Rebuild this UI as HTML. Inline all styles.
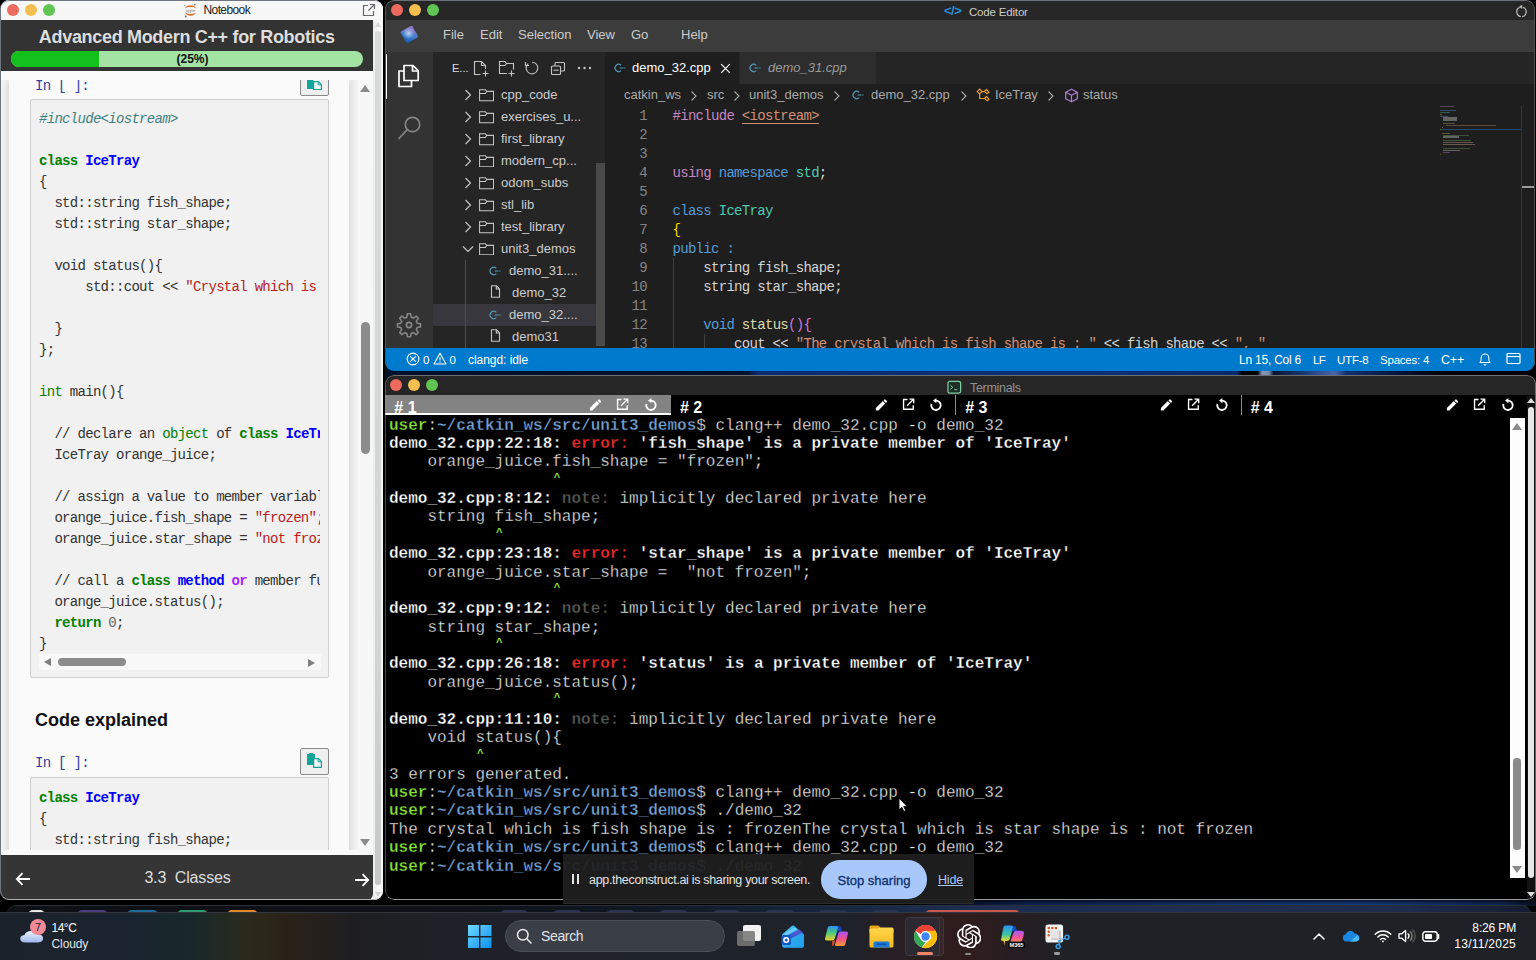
<!DOCTYPE html>
<html lang="en">
<head>
<meta charset="utf-8">
<title>Workspace</title>
<style>
*{box-sizing:border-box;margin:0;padding:0}
html,body{width:1536px;height:960px;overflow:hidden;background:#000}
body{position:relative;font-family:"Liberation Sans",sans-serif;color:#000}
.abs{position:absolute}
.sans{font-family:"Liberation Sans",sans-serif}
.mono{font-family:"Liberation Mono",monospace}
.dot{position:absolute;width:12px;height:12px;border-radius:50%}
/* ---------- desktop ---------- */
#desk{position:absolute;left:0;top:0;width:1536px;height:960px;background:#000;overflow:hidden}
#wall1{position:absolute;left:385px;top:362px;width:1151px;height:22px;background:linear-gradient(90deg,#03102c 0%,#04122f 31.500%,#0b2c72 32.500%,#0c3078 60%,#0a2a6c 74%,#000 74.500%,#000 75.800%,#8796b8 76.200%,#7a8cb0 76.800%,#0a1630 77.200%,#1c3a78 80%,#4a68a8 82.500%,#12306e 83.500%,#06143a 88%,#000 92.500%)}
#wall2{position:absolute;left:385px;top:896px;width:1151px;height:10px;background:linear-gradient(90deg,#000 0%,#000 44%,#06122c 50%,#0c2250 56%,#142f66 70%,#18387a 85%,#102450 97%,#081020 100%)}
#wall2b{position:absolute;left:385px;top:896px;width:1151px;height:10px;background:linear-gradient(180deg,rgba(0,0,0,.55) 0%,rgba(0,0,0,.55) 45%,rgba(0,0,0,0) 85%)}
#dock{position:absolute;left:7px;top:905px;width:1524px;height:12px;border-radius:9px 9px 0 0;border-top:1px solid #2b3038;background:linear-gradient(90deg,#0d1116 0%,#0e1218 30%,#101824 42%,#15243a 52%,#1b2d50 62%,#1e2d52 75%,#1d2b4e 92%,#141c30 100%)}
.pk{position:absolute;top:909.500px;height:6px;border-radius:5px 5px 0 0}
/* ---------- notebook window ---------- */
#nb{position:absolute;left:0;top:0;width:383px;height:899.500px;background:#fafafa;border-radius:9px 9px 9px 9px;overflow:hidden;border-left:1px solid #70747c}
#nb .title{position:absolute;left:0;top:0;width:383px;height:20px;background:#f7f7f7}
#nb .hdr{position:absolute;left:0;top:20px;width:372px;height:51px;background:#333}
#nb .ftr{position:absolute;left:0;top:855px;width:372px;height:44.500px;background:#353535;border-radius:0 0 6px 0}

.nbm{font-family:"Liberation Mono",monospace;font-size:14px;line-height:21px;letter-spacing:-0.7px;white-space:pre}
.nbc{overflow:hidden}
.nbc pre{font-family:"Liberation Mono",monospace;font-size:14px;line-height:21px;letter-spacing:-0.7px;color:#333;white-space:pre}
.nbc .cm{color:#408080;font-style:italic}
.nbc .kw{color:#008000}
.nbc .nc{color:#0000ff}
.nbc .kt{color:#008000}
.nbc .st{color:#ba2121}
.nbc .ow{color:#aa22ff}
.nbc .nu{color:#666}
/* ---------- code editor window ---------- */
#ce{position:absolute;left:385px;top:0;width:1150px;height:371px;background:#1e1e1e;border-radius:9px 9px 9px 9px;overflow:hidden}

.ui{font-family:"Liberation Sans",sans-serif;font-size:13px;line-height:18px;white-space:pre}

.ln{font-family:"Liberation Mono",monospace;font-size:14px;line-height:19px;letter-spacing:-0.7px;color:#858585;text-align:right;white-space:pre}
.cd{font-family:"Liberation Mono",monospace;font-size:14px;line-height:19px;letter-spacing:-0.7px;color:#d4d4d4;white-space:pre}
.cd .c1{color:#c586c0}.cd .k{color:#569cd6}.cd .t{color:#4ec9b0}.cd .s{color:#ce9178}.cd .f{color:#dcdcaa}.cd .b1{color:#ffd700}.cd .b2{color:#da70d6}
.cd .u{text-decoration:underline;text-underline-offset:3px}
.sb{font-family:"Liberation Sans",sans-serif;font-size:11.500px;line-height:18px;color:#fff;white-space:pre;letter-spacing:-0.22px}
/* ---------- terminals window ---------- */
#tm{position:absolute;left:385px;top:375px;width:1150.500px;height:524.500px;background:#000;border-radius:9px;overflow:hidden}

.tt{font-family:"Liberation Mono",monospace;font-size:16px;line-height:18px;color:#ececec;white-space:pre;-webkit-text-stroke:.3px #000}
.tt b{-webkit-text-stroke:.28px #000}
.tt .ca{-webkit-text-stroke:0;display:inline-block;width:9.600px;text-align:center;font-size:11px;line-height:10px;vertical-align:3.800px}
.tt b{font-weight:bold;color:#fff}
.tt .g{color:#8ae234}.tt .bl{color:#729fcf}.tt .r{color:#ef2929}.tt .n{color:#555753}
/* ---------- taskbar ---------- */
#tb{position:absolute;left:0;top:912px;width:1536px;height:48px;background:#1e2227}
</style>
</head>
<body>
<div id="desk">
<div id="wall1"></div>
<div id="wall2"></div><div id="wall2b"></div>
<div id="dock"></div>
<div class="pk" style="left:28px;width:17px;background:#e8e8e8"></div><div class="pk" style="left:77px;width:31px;background:#4a3c80"></div><div class="pk" style="left:127px;width:31px;background:#1c6c9c"></div><div class="pk" style="left:177px;width:31px;background:#2c9c6c"></div><div class="pk" style="left:227px;width:31px;background:#e08a2c"></div><div class="pk" style="left:500px;width:28px;background:#2a3450"></div><div class="pk" style="left:553px;width:29px;background:#2a3450"></div><div class="pk" style="left:606px;width:29px;background:#2a3450"></div><div class="pk" style="left:659px;width:29px;background:#2a3450"></div><div class="pk" style="left:713px;width:28px;background:#2a3450"></div><div class="pk" style="left:765px;width:30px;background:#2a3450"></div><div class="pk" style="left:818px;width:30px;background:#2a3450"></div><div class="pk" style="left:872px;width:28px;background:#2a3450"></div><div class="pk" style="left:925px;width:95px;background:#c8584a"></div>

<!-- NOTEBOOK -->
<div id="nb">
<div class="title"></div>
<div class="hdr"></div>
<div class="dot" style="left:6px;top:4px;background:#ec6a5e"></div>
<div class="dot" style="left:24px;top:4px;background:#f4bf4f"></div>
<div class="dot" style="left:42px;top:4px;background:#61c554"></div>
<svg class="abs" style="left:182px;top:3px" width="15" height="15" viewBox="0 0 15 15"><path d="M2 9.600A5.800 4.600 0 0 0 13 9.600A6 2.400 0 0 1 2 9.600Z" fill="#e46e2e"/><path d="M2 5.400A5.800 4.600 0 0 1 13 5.400A6 2.400 0 0 0 2 5.400Z" fill="#e46e2e"/><circle cx="11.800" cy="1.600" r=".9" fill="#767677"/><circle cx="2.800" cy="13.400" r="1" fill="#767677"/><circle cx="2" cy="2.600" r=".6" fill="#767677"/><text x="7.500" y="8.500" font-size="3.200" text-anchor="middle" fill="#6a6a6a" font-family="Liberation Sans, sans-serif" font-style="italic">jupyter</text></svg>
<div class="abs sans" style="left:202.500px;top:2.300px;font-size:12px;line-height:16px;letter-spacing:-0.6px;color:#222">Notebook</div>
<svg class="abs" style="left:361px;top:3px" width="14" height="14" viewBox="0 0 14 14" fill="none" stroke="#666" stroke-width="1.2"><path d="M6 2.5H1.5V12.5H11.5V8"/><path d="M8 1.5H12.5V6M12.5 1.5L6.5 7.5"/></svg>
<div class="abs sans" style="left:0;top:24px;width:371.500px;text-align:center;font-size:18px;line-height:26px;font-weight:bold;color:#ddd;letter-spacing:-0.32px">Advanced Modern C++ for Robotics</div>
<div class="abs" style="left:10px;top:51px;width:352px;height:16px;border-radius:8px;background:#a3e3a3;overflow:hidden"><div style="width:88px;height:16px;background:#14c11c"></div></div>
<div class="abs sans" style="left:15px;top:51px;width:353px;height:16px;text-align:center;font-size:12px;line-height:17px;font-weight:bold;color:#111">(25%)</div>
<!-- notebook body -->
<div class="abs" style="left:0;top:71px;width:373px;height:784px;background:#f9f9f9;overflow:hidden">
 <div class="abs" style="left:8px;top:9px;width:340px;height:800px;background:#fafafa;box-shadow:0 0 10px 1px rgba(87,87,87,.28)"></div>
 <!-- cell 1 -->
 <div class="abs nbm" style="left:34px;top:4.5px;color:#303f9f">In [ ]:</div>
 <div class="abs" style="left:299px;top:-4px;width:29px;height:29px;background:#efefef;border:1px solid #8a8a8a;border-radius:2px"></div>
 <svg class="abs" style="left:306px;top:7px" width="17" height="12" viewBox="0 0 17 12"><rect x="0" y="0" width="6.500" height="11" fill="#12a59a"/><path d="M6.600 3.600H11.400L14.400 6.600V11.600H6.600Z" fill="#f4f4f4" stroke="#12a59a" stroke-width="1.2"/><path d="M11.200 3.600V6.800H14.400" fill="none" stroke="#12a59a" stroke-width="1"/></svg>
 <div class="abs" style="left:29px;top:28px;width:299px;height:579px;background:#f1f1f1;border:1px solid #cfcfcf;border-radius:2px"></div>
 <div class="abs nbc" style="left:38px;top:38.400px;width:281px;height:544.600px">
<pre><i class="cm">#include&lt;iostream&gt;</i>

<b class="kw">class</b> <b class="nc">IceTray</b>
{
  std::string fish_shape;
  std::string star_shape;

  void status(){
      std::cout &lt;&lt; <span class="st">"Crystal which is fish shape is : "</span>

  }
};

<span class="kt">int</span> main(){

  // declare an <span class="kt">object</span> of <b class="kw">class</b> <b class="nc">IceTray</b>
  IceTray orange_juice;

  // assign a value to member variables
  orange_juice.fish_shape = <span class="st">"frozen"</span>;
  orange_juice.star_shape = <span class="st">"not frozen"</span>;

  // call a <b class="kw">class</b> <b class="nc">method</b> <b class="ow">or</b> member function
  orange_juice.status();
  <b class="kw">return</b> <span class="nu">0</span>;
}</pre>
 </div>
 <!-- h-scrollbar -->
 <div class="abs" style="left:38px;top:583px;width:282px;height:16px;background:#f8f8f8"></div>
 <div class="abs" style="left:42.500px;top:587px;border-style:solid;border-width:4.500px 7.500px 4.500px 0;border-color:transparent #7f7f7f transparent transparent;width:0;height:0"></div>
 <div class="abs" style="left:307px;top:587.500px;border-style:solid;border-width:4.500px 0 4.500px 7.500px;border-color:transparent transparent transparent #7f7f7f;width:0;height:0"></div>
 <div class="abs" style="left:57px;top:587px;width:68px;height:8px;border-radius:4px;background:#8b8b8b"></div>
 <!-- heading -->
 <div class="abs sans" style="left:34px;top:637.700px;font-size:18px;line-height:22px;font-weight:bold;color:#111">Code explained</div>
 <!-- cell 2 -->
 <div class="abs nbm" style="left:34px;top:682.200px;color:#303f9f">In [ ]:</div>
 <div class="abs" style="left:299px;top:677px;width:29px;height:27px;background:#efefef;border:1px solid #8a8a8a;border-radius:2px"></div>
 <svg class="abs" style="left:306px;top:682px" width="17" height="16" viewBox="0 0 17 16"><rect x="0" y="1" width="8" height="11" fill="#12a59a"/><rect x="2" y="0" width="4" height="2" fill="#12a59a"/><path d="M6.6 5.6H11.4L14.4 8.6V14.4H6.6Z" fill="#f4f4f4" stroke="#12a59a" stroke-width="1.2"/><path d="M11.2 5.6V8.8H14.4" fill="none" stroke="#12a59a" stroke-width="1"/></svg>
 <div class="abs" style="left:29px;top:706px;width:299px;height:100px;background:#f1f1f1;border:1px solid #cfcfcf;border-radius:2px"></div>
 <div class="abs nbc" style="left:38px;top:717.400px;width:281px;height:68px">
<pre><b class="kw">class</b> <b class="nc">IceTray</b>
{
  std::string fish_shape;
  std::string star_shape;</pre>
 </div>
 <div class="abs" style="left:0;top:778.600px;width:373px;height:6px;background:#f9f9f9"></div>
 <!-- inner v-scrollbar -->
 <div class="abs" style="left:349px;top:9px;width:8px;height:769px;background:linear-gradient(90deg,#e4e4e4,#f4f4f4)"></div>
 <div class="abs" style="left:357px;top:0;width:16px;height:784px;background:#f7f7f7"></div>
 <div class="abs" style="left:358.500px;top:14px;border-style:solid;border-width:0 5px 7px 5px;border-color:transparent transparent #8b8b8b transparent;width:0;height:0"></div>
 <div class="abs" style="left:358.500px;top:768px;border-style:solid;border-width:7px 5px 0 5px;border-color:#8b8b8b transparent transparent transparent;width:0;height:0"></div>
 <div class="abs" style="left:360px;top:251px;width:9px;height:132px;border-radius:4.5px;background:#8b8b8b"></div>
 <div class="abs" style="left:0;top:0;width:373px;height:9px;background:#fafafa"></div>
</div>
<!-- outer scrollbar -->
<div class="abs" style="left:372px;top:20px;width:11px;height:880px;background:linear-gradient(90deg,#ececec,#f8f8f8 60%,#f2f2f2)"></div>
<div class="abs" style="left:374.200px;top:31px;width:5.600px;height:853.700px;border-radius:2.800px;background:linear-gradient(180deg,#d8dada,#d4d6d6 70%,#c6c8c8)"></div>
<div class="abs" style="left:373.500px;top:22px;border-style:solid;border-width:0 3.500px 5px 3.500px;border-color:transparent transparent #d8d8d8 transparent;width:0;height:0"></div>
<div class="abs" style="left:373.500px;top:892px;border-style:solid;border-width:5px 3.500px 0 3.500px;border-color:#d0d0d0 transparent transparent transparent;width:0;height:0"></div>

<div class="ftr"></div>
<div class="abs sans" style="left:0;top:867px;width:373px;text-align:center;font-size:16px;line-height:22px;color:#ddd;white-space:pre;letter-spacing:-0.15px">3.3  Classes</div>
<svg class="abs" style="left:14px;top:871.500px" width="16" height="14" viewBox="0 0 16 14" fill="none" stroke="#fff" stroke-width="1.8"><path d="M15 7H2M7.5 1.2L1.8 7L7.5 12.8"/></svg>
<svg class="abs" style="left:353px;top:872.700px" width="16" height="14" viewBox="0 0 16 14" fill="none" stroke="#fff" stroke-width="1.8"><path d="M1 7H14M8.500 1.200L14.200 7L8.500 12.800"/></svg>
<div class="abs" style="left:-1px;top:0;width:384px;height:899.500px;border-radius:9px;border:1px solid transparent;border-top:1.500px solid #72767e;border-bottom-color:#b0b0b0"></div>

</div>

<!-- CODE EDITOR -->
<div id="ce">
<div class="abs" style="left:0;top:0;width:1151px;height:20px;background:#262626"></div>
<div class="dot" style="left:6px;top:4px;background:#ec6a5e"></div>
<div class="dot" style="left:24px;top:4px;background:#f4bf4f"></div>
<div class="dot" style="left:42px;top:4px;background:#61c554"></div>
<div class="abs sans" style="left:559px;top:3px;font-size:13px;line-height:16px;font-weight:bold;color:#2a8fd0;letter-spacing:-0.5px">&lt;/&gt;</div>
<div class="abs sans" style="left:584px;top:4px;font-size:11.5px;line-height:16px;color:#ccc;letter-spacing:-0.18px">Code Editor</div>
<svg class="abs" style="left:1129.500px;top:4.500px" width="13" height="13" viewBox="0 0 13 13" fill="none" stroke="#bdbdbd" stroke-width="1.200"><path d="M5.800 11.700A5 5 0 0 1 4.600 2.300M8.200 2.200A5 5 0 0 1 7.200 11.700"/><path d="M7.200 -.3L4.200 1.700L7.200 3.900Z" fill="#bdbdbd" stroke="none"/></svg>
<div class="abs" style="left:0;top:20px;width:1151px;height:32px;background:#3c3c3c"></div>
<svg class="abs" style="left:13px;top:23px" width="24" height="22" viewBox="0 0 24 22"><defs><linearGradient id="lg1" x1="0" y1="1" x2="1" y2="0"><stop offset="0" stop-color="#1553ac"/><stop offset=".45" stop-color="#3f7fd0"/><stop offset=".8" stop-color="#8f74c6"/><stop offset="1" stop-color="#9a78c8"/></linearGradient><radialGradient id="lg2" cx=".5" cy=".4" r=".45"><stop offset="0" stop-color="#c4d8f4" stop-opacity=".95"/><stop offset="1" stop-color="#9dc0ea" stop-opacity="0"/></radialGradient></defs><g transform="translate(11.300 11.400) rotate(-29)"><rect x="-6.700" y="-6.700" width="13.400" height="13.400" rx="1.300" fill="url(#lg1)"/><rect x="-6.700" y="-6.700" width="13.400" height="13.400" rx="1.300" fill="url(#lg2)"/></g></svg>
<div class="abs ui" style="left:58px;top:26.300px;color:#ccc">File</div>
<div class="abs ui" style="left:95px;top:26.300px;color:#ccc">Edit</div>
<div class="abs ui" style="left:133px;top:26.300px;color:#ccc">Selection</div>
<div class="abs ui" style="left:202px;top:26.300px;color:#ccc">View</div>
<div class="abs ui" style="left:246px;top:26.300px;color:#ccc">Go</div>
<div class="abs ui" style="left:296px;top:26.300px;color:#ccc">Help</div>
<div class="abs" style="left:0;top:52px;width:48px;height:296px;background:#333"></div>
<div class="abs" style="left:0;top:54px;width:2px;height:45px;background:#fff"></div>
<svg class="abs" style="left:12px;top:63px" width="24" height="26" viewBox="0 0 24 26" fill="none" stroke="#fff" stroke-width="1.7" stroke-linejoin="round"><path d="M7 17.500V2.500H16L21.200 7.700V17.500Z"/><path d="M15.500 2.500V8H21"/><path d="M7 8H2V23.500H14.500V17.500"/></svg>
<svg class="abs" style="left:12px;top:115px" width="26" height="26" viewBox="0 0 26 26" fill="none" stroke="#858585" stroke-width="1.7"><circle cx="15.500" cy="9.500" r="7.200"/><path d="M10.300 14.700L1.500 24"/></svg>
<svg class="abs" style="left:11px;top:312px" width="26" height="26" viewBox="0 0 26 26" fill="none" stroke="#858585" stroke-width="1.6" stroke-linejoin="round"><circle cx="13" cy="13" r="2.600"/><path d="M11.400 1.800H14.600L15.200 5.200L17.300 6.100L20.100 4.100L22.300 6.300L20.300 9.100L21.200 11.200L24.500 11.800V14.900L21.200 15.500L20.300 17.600L22.300 20.400L20.100 22.600L17.300 20.600L15.200 21.500L14.600 24.800H11.400L10.800 21.500L8.700 20.600L5.900 22.600L3.700 20.400L5.700 17.600L4.800 15.500L1.500 14.900V11.800L4.800 11.200L5.700 9.100L3.700 6.300L5.900 4.100L8.700 6.100L10.800 5.200Z"/></svg>
<div class="abs" style="left:48px;top:52px;width:172px;height:296px;background:#252526"></div>
<div class="abs sans" style="left:67px;top:60px;font-size:11px;line-height:16px;color:#ddd">E...</div>
<svg class="abs" style="left:88px;top:60px" width="18" height="17" viewBox="0 0 18 17" fill="none" stroke="#c5c5c5" stroke-width="1.1"><path d="M7.500 14.500H1.500V1.500H8.500L12.500 5.500V9"/><path d="M8.500 1.500V5.500H12.500"/><path d="M12.500 10.500V16.500M9.500 13.500H15.500"/></svg>
<svg class="abs" style="left:113px;top:60px" width="19" height="17" viewBox="0 0 19 17" fill="none" stroke="#c5c5c5" stroke-width="1.1"><path d="M9 13.500H1.500V1.500H7L8.500 3.500H15.500V9.500"/><path d="M1.500 5.500H7L8.500 3.500"/><path d="M13.500 10.500V16.500M10.500 13.500H16.500"/></svg>
<svg class="abs" style="left:139px;top:60px" width="16" height="16" viewBox="0 0 16 16" fill="none" stroke="#c5c5c5" stroke-width="1.1"><path d="M4.200 3.600A5.800 5.800 0 1 0 8 2.200"/><path d="M1.500 2V5.500H5"/></svg>
<svg class="abs" style="left:165px;top:60px" width="16" height="16" viewBox="0 0 16 16" fill="none" stroke="#c5c5c5" stroke-width="1.1"><rect x="1.500" y="6" width="9" height="8.500" rx="1"/><path d="M5 6V3.500Q5 2.500 6 2.500H13.500Q14.500 2.500 14.500 3.500V10Q14.500 11 13.500 11H10.500"/><path d="M3.500 10.200H8.500"/></svg>
<svg class="abs" style="left:192px;top:66px" width="15" height="4" viewBox="0 0 15 4" fill="#c5c5c5"><circle cx="2" cy="2" r="1.200"/><circle cx="7.500" cy="2" r="1.200"/><circle cx="13" cy="2" r="1.200"/></svg>
<div class="abs" style="left:48px;top:304px;width:163px;height:22px;background:#37373d"></div>
<svg class="abs" style="left:79px;top:89px" width="8" height="12" viewBox="0 0 8 12" fill="none" stroke="#c5c5c5" stroke-width="1.2"><path d="M1.500 1L6.500 6L1.500 11"/></svg>
<svg class="abs" style="left:93.5px;top:89px" width="16" height="12.500" viewBox="0 0 17 13" fill="none" stroke="#c5c5c5" stroke-width="1.1"><path d="M.6 12.400V.6H6.800L8.200 2.400H15.400V12.400Z"/><path d="M.6 4.600H6.800L8.200 2.400"/></svg>
<div class="abs ui" style="left:116px;top:86px;color:#ccc">cpp_code</div>
<svg class="abs" style="left:79px;top:111px" width="8" height="12" viewBox="0 0 8 12" fill="none" stroke="#c5c5c5" stroke-width="1.2"><path d="M1.500 1L6.500 6L1.500 11"/></svg>
<svg class="abs" style="left:93.5px;top:111px" width="16" height="12.500" viewBox="0 0 17 13" fill="none" stroke="#c5c5c5" stroke-width="1.1"><path d="M.6 12.400V.6H6.800L8.200 2.400H15.400V12.400Z"/><path d="M.6 4.600H6.800L8.200 2.400"/></svg>
<div class="abs ui" style="left:116px;top:108px;color:#ccc">exercises_u...</div>
<svg class="abs" style="left:79px;top:133px" width="8" height="12" viewBox="0 0 8 12" fill="none" stroke="#c5c5c5" stroke-width="1.2"><path d="M1.500 1L6.500 6L1.500 11"/></svg>
<svg class="abs" style="left:93.5px;top:133px" width="16" height="12.500" viewBox="0 0 17 13" fill="none" stroke="#c5c5c5" stroke-width="1.1"><path d="M.6 12.400V.6H6.800L8.200 2.400H15.400V12.400Z"/><path d="M.6 4.600H6.800L8.200 2.400"/></svg>
<div class="abs ui" style="left:116px;top:130px;color:#ccc">first_library</div>
<svg class="abs" style="left:79px;top:154.5px" width="8" height="12" viewBox="0 0 8 12" fill="none" stroke="#c5c5c5" stroke-width="1.2"><path d="M1.500 1L6.500 6L1.500 11"/></svg>
<svg class="abs" style="left:93.5px;top:154.5px" width="16" height="12.500" viewBox="0 0 17 13" fill="none" stroke="#c5c5c5" stroke-width="1.1"><path d="M.6 12.400V.6H6.800L8.200 2.400H15.400V12.400Z"/><path d="M.6 4.600H6.800L8.200 2.400"/></svg>
<div class="abs ui" style="left:116px;top:151.5px;color:#ccc">modern_cp...</div>
<svg class="abs" style="left:79px;top:177px" width="8" height="12" viewBox="0 0 8 12" fill="none" stroke="#c5c5c5" stroke-width="1.2"><path d="M1.500 1L6.500 6L1.500 11"/></svg>
<svg class="abs" style="left:93.5px;top:177px" width="16" height="12.500" viewBox="0 0 17 13" fill="none" stroke="#c5c5c5" stroke-width="1.1"><path d="M.6 12.400V.6H6.800L8.200 2.400H15.400V12.400Z"/><path d="M.6 4.600H6.800L8.200 2.400"/></svg>
<div class="abs ui" style="left:116px;top:174px;color:#ccc">odom_subs</div>
<svg class="abs" style="left:79px;top:199px" width="8" height="12" viewBox="0 0 8 12" fill="none" stroke="#c5c5c5" stroke-width="1.2"><path d="M1.500 1L6.500 6L1.500 11"/></svg>
<svg class="abs" style="left:93.5px;top:199px" width="16" height="12.500" viewBox="0 0 17 13" fill="none" stroke="#c5c5c5" stroke-width="1.1"><path d="M.6 12.400V.6H6.800L8.200 2.400H15.400V12.400Z"/><path d="M.6 4.600H6.800L8.200 2.400"/></svg>
<div class="abs ui" style="left:116px;top:196px;color:#ccc">stl_lib</div>
<svg class="abs" style="left:79px;top:221px" width="8" height="12" viewBox="0 0 8 12" fill="none" stroke="#c5c5c5" stroke-width="1.2"><path d="M1.500 1L6.500 6L1.500 11"/></svg>
<svg class="abs" style="left:93.5px;top:221px" width="16" height="12.500" viewBox="0 0 17 13" fill="none" stroke="#c5c5c5" stroke-width="1.1"><path d="M.6 12.400V.6H6.800L8.200 2.400H15.400V12.400Z"/><path d="M.6 4.600H6.800L8.200 2.400"/></svg>
<div class="abs ui" style="left:116px;top:218px;color:#ccc">test_library</div>
<svg class="abs" style="left:77px;top:244.5px" width="12" height="8" viewBox="0 0 12 8" fill="none" stroke="#c5c5c5" stroke-width="1.2"><path d="M1 1.500L6 6.500L11 1.500"/></svg>
<svg class="abs" style="left:93.5px;top:242.5px" width="16" height="12.500" viewBox="0 0 17 13" fill="none" stroke="#c5c5c5" stroke-width="1.1"><path d="M.6 12.400V.6H6.800L8.200 2.400H15.400V12.400Z"/><path d="M.6 4.600H6.800L8.200 2.400"/></svg>
<div class="abs ui" style="left:116px;top:239.5px;color:#ccc">unit3_demos</div>
<div class="abs" style="left:80.300px;top:260px;width:1px;height:88px;background:#4c4c4c"></div>
<svg class="abs" style="left:104px;top:266px" width="12" height="10" viewBox="0 0 12 10" fill="none" stroke="#519aba" stroke-width="1.2"><path d="M7.200 2.400A3.600 3.600 0 1 0 7.200 7.600"/><path d="M5.500 5H9.500M10.200 5H11.500" stroke-width="1"/></svg>
<div class="abs ui" style="left:124px;top:262px;color:#ccc">demo_31....</div>
<svg class="abs" style="left:105px;top:284.500px" width="11" height="13" viewBox="0 0 11 13" fill="none" stroke="#c5c5c5" stroke-width="1.1"><path d="M1.500 .8H6.500L9.500 3.800V12.200H1.500Z"/><path d="M6.300 .8V4H9.500"/></svg>
<div class="abs ui" style="left:127px;top:283.5px;color:#ccc">demo_32</div>
<svg class="abs" style="left:104px;top:310px" width="12" height="10" viewBox="0 0 12 10" fill="none" stroke="#519aba" stroke-width="1.2"><path d="M7.200 2.400A3.600 3.600 0 1 0 7.200 7.600"/><path d="M5.500 5H9.500M10.200 5H11.500" stroke-width="1"/></svg>
<div class="abs ui" style="left:124px;top:306px;color:#ccc">demo_32....</div>
<svg class="abs" style="left:105px;top:328.500px" width="11" height="13" viewBox="0 0 11 13" fill="none" stroke="#c5c5c5" stroke-width="1.1"><path d="M1.500 .8H6.500L9.500 3.800V12.200H1.500Z"/><path d="M6.300 .8V4H9.500"/></svg>
<div class="abs ui" style="left:127px;top:327.5px;color:#ccc">demo31</div>
<div class="abs" style="left:211px;top:163px;width:9px;height:183px;background:#4a4a4a"></div>
<div class="abs" style="left:220px;top:52px;width:931px;height:32px;background:#252526"></div>
<div class="abs" style="left:220px;top:52px;width:134px;height:32px;background:#1e1e1e"></div>
<div class="abs" style="left:354.5px;top:52px;width:136px;height:32px;background:#2d2d2d"></div>
<svg class="abs" style="left:229px;top:62.5px" width="12" height="10" viewBox="0 0 12 10" fill="none" stroke="#519aba" stroke-width="1.2"><path d="M7.200 2.400A3.600 3.600 0 1 0 7.200 7.600"/><path d="M5.500 5H9.500M10.200 5H11.500" stroke-width="1"/></svg>
<div class="abs ui" style="left:247px;top:58.5px;color:#fff">demo_32.cpp</div>
<svg class="abs" style="left:335px;top:63px" width="11" height="11" viewBox="0 0 11 11" fill="none" stroke="#fff" stroke-width="1.2"><path d="M1.200 1.200L9.800 9.800M9.800 1.200L1.200 9.800"/></svg>
<svg class="abs" style="left:364px;top:62.5px" width="12" height="10" viewBox="0 0 12 10" fill="none" stroke="#519aba" stroke-width="1.2"><path d="M7.200 2.400A3.600 3.600 0 1 0 7.200 7.600"/><path d="M5.500 5H9.500M10.200 5H11.500" stroke-width="1"/></svg>
<div class="abs ui" style="left:383px;top:58.5px;color:#9a9a9a;font-style:italic">demo_31.cpp</div>
<div class="abs" style="left:220px;top:84px;width:931px;height:22px;background:#1e1e1e"></div>
<div class="abs ui" style="left:239px;top:85.500px;color:#a9a9a9">catkin_ws</div>
<div class="abs ui" style="left:322px;top:85.500px;color:#a9a9a9">src</div>
<div class="abs ui" style="left:364px;top:85.500px;color:#a9a9a9">unit3_demos</div>
<div class="abs ui" style="left:486px;top:85.500px;color:#a9a9a9">demo_32.cpp</div>
<div class="abs ui" style="left:610px;top:85.500px;color:#a9a9a9">IceTray</div>
<div class="abs ui" style="left:698px;top:85.500px;color:#a9a9a9">status</div>
<svg class="abs" style="left:304.5px;top:89.500px" width="8" height="12" viewBox="0 0 8 12" fill="none" stroke="#a9a9a9" stroke-width="1.1"><path d="M1.500 1.500L6 6L1.500 10.500"/></svg>
<svg class="abs" style="left:347.5px;top:89.500px" width="8" height="12" viewBox="0 0 8 12" fill="none" stroke="#a9a9a9" stroke-width="1.1"><path d="M1.500 1.500L6 6L1.500 10.500"/></svg>
<svg class="abs" style="left:448px;top:89.500px" width="8" height="12" viewBox="0 0 8 12" fill="none" stroke="#a9a9a9" stroke-width="1.1"><path d="M1.500 1.500L6 6L1.500 10.500"/></svg>
<svg class="abs" style="left:574.5px;top:89.500px" width="8" height="12" viewBox="0 0 8 12" fill="none" stroke="#a9a9a9" stroke-width="1.1"><path d="M1.500 1.500L6 6L1.500 10.500"/></svg>
<svg class="abs" style="left:662px;top:89.500px" width="8" height="12" viewBox="0 0 8 12" fill="none" stroke="#a9a9a9" stroke-width="1.1"><path d="M1.500 1.500L6 6L1.500 10.500"/></svg>
<svg class="abs" style="left:466.5px;top:90px" width="12" height="10" viewBox="0 0 12 10" fill="none" stroke="#519aba" stroke-width="1.2"><path d="M7.200 2.400A3.600 3.600 0 1 0 7.200 7.600"/><path d="M5.500 5H9.500M10.200 5H11.500" stroke-width="1"/></svg>
<svg class="abs" style="left:591px;top:88px" width="15" height="15" viewBox="0 0 15 15" fill="none" stroke="#ee9d28" stroke-width="1.2"><path d="M1.200 3.600L3.600 1.200L6 3.600L3.600 6Z"/><path d="M3.600 6V10.500H8.500M6 3.600H8.500" /><path d="M8.500 3.200L10.500 1.600L13 4.200L11 5.800Z M8.500 10.200L10.500 8.600L13 11.200L11 12.800Z"/></svg>
<svg class="abs" style="left:679px;top:88px" width="15" height="15" viewBox="0 0 15 15" fill="none" stroke="#b180d7" stroke-width="1.200" stroke-linejoin="round"><path d="M7.500 1.200L13.300 4.200V10.800L7.500 13.800L1.700 10.800V4.200Z"/><path d="M1.700 4.200L7.500 7.300L13.300 4.200M7.500 7.300V13.800"/></svg>
<div class="abs" style="left:288px;top:258px;width:1px;height:90px;background:#404040"></div>
<div class="abs" style="left:319px;top:334px;width:1px;height:14px;background:#404040"></div>
<div class="abs ln" style="left:220px;top:106.75px;width:42px">1</div>
<div class="abs cd" style="left:287.5px;top:106.75px"><span class="c1">#include</span> <span class="s u">&lt;iostream&gt;</span></div>
<div class="abs ln" style="left:220px;top:125.75px;width:42px">2</div>
<div class="abs ln" style="left:220px;top:144.75px;width:42px">3</div>
<div class="abs ln" style="left:220px;top:163.75px;width:42px">4</div>
<div class="abs cd" style="left:287.5px;top:163.75px"><span class="c1">using</span> <span class="k">namespace</span> <span class="t">std</span>;</div>
<div class="abs ln" style="left:220px;top:182.75px;width:42px">5</div>
<div class="abs ln" style="left:220px;top:201.75px;width:42px">6</div>
<div class="abs cd" style="left:287.5px;top:201.75px"><span class="k">class</span> <span class="t">IceTray</span></div>
<div class="abs ln" style="left:220px;top:220.75px;width:42px">7</div>
<div class="abs cd" style="left:287.5px;top:220.75px"><span class="b1">{</span></div>
<div class="abs ln" style="left:220px;top:239.75px;width:42px">8</div>
<div class="abs cd" style="left:287.5px;top:239.75px"><span class="k">public</span> <span class="k">:</span></div>
<div class="abs ln" style="left:220px;top:258.75px;width:42px">9</div>
<div class="abs cd" style="left:287.5px;top:258.75px">    string fish_shape;</div>
<div class="abs ln" style="left:220px;top:277.75px;width:42px">10</div>
<div class="abs cd" style="left:287.5px;top:277.75px">    string star_shape;</div>
<div class="abs ln" style="left:220px;top:296.75px;width:42px">11</div>
<div class="abs ln" style="left:220px;top:315.75px;width:42px">12</div>
<div class="abs cd" style="left:287.5px;top:315.75px">    <span class="k">void</span> <span class="f">status</span><span class="b2">(){</span></div>
<div class="abs ln" style="left:220px;top:334.75px;width:42px">13</div>
<div class="abs cd" style="left:287.5px;top:334.75px">        cout &lt;&lt; <span class="s">"The crystal which is fish shape is : "</span> &lt;&lt; fish_shape &lt;&lt; <span class="s">", "</span></div>
<div class="abs" style="left:1055px;top:106.0px;width:14px;height:1.300px;background:#9a6a95;opacity:.5"></div>
<div class="abs" style="left:1055px;top:109.8px;width:16px;height:1.300px;background:#4f7fae;opacity:.5"></div>
<div class="abs" style="left:1055px;top:111.7px;width:10px;height:1.300px;background:#3e9a8a;opacity:.5"></div>
<div class="abs" style="left:1055px;top:113.6px;width:2px;height:1.300px;background:#b5a000;opacity:.5"></div>
<div class="abs" style="left:1055px;top:115.5px;width:8px;height:1.300px;background:#4f7fae;opacity:.5"></div>
<div class="abs" style="left:1058px;top:117.4px;width:14px;height:1.300px;background:#aaa;opacity:.5"></div>
<div class="abs" style="left:1058px;top:119.3px;width:14px;height:1.300px;background:#aaa;opacity:.5"></div>
<div class="abs" style="left:1058px;top:123.1px;width:12px;height:1.300px;background:#8a8a60;opacity:.5"></div>
<div class="abs" style="left:1061px;top:125.0px;width:50px;height:1.300px;background:#a07a62;opacity:.5"></div>
<div class="abs" style="left:1057px;top:126.9px;width:1px;height:1.300px;background:#aaa;opacity:.5"></div>
<div class="abs" style="left:1055px;top:128.8px;width:2px;height:1.300px;background:#b5a000;opacity:.5"></div>
<div class="abs" style="left:1057px;top:132.6px;width:8px;height:1.300px;background:#8a8a60;opacity:.5"></div>
<div class="abs" style="left:1058px;top:134.5px;width:26px;height:1.300px;background:#5f8a4f;opacity:.5"></div>
<div class="abs" style="left:1058px;top:136.4px;width:16px;height:1.300px;background:#aaa;opacity:.5"></div>
<div class="abs" style="left:1058px;top:140.2px;width:28px;height:1.300px;background:#5f8a4f;opacity:.5"></div>
<div class="abs" style="left:1058px;top:142.1px;width:30px;height:1.300px;background:#b59080;opacity:.5"></div>
<div class="abs" style="left:1058px;top:144.0px;width:32px;height:1.300px;background:#b59080;opacity:.5"></div>
<div class="abs" style="left:1058px;top:147.8px;width:27px;height:1.300px;background:#5f8a4f;opacity:.5"></div>
<div class="abs" style="left:1058px;top:149.7px;width:17px;height:1.300px;background:#aaa;opacity:.5"></div>
<div class="abs" style="left:1058px;top:151.6px;width:7px;height:1.300px;background:#9a6a95;opacity:.5"></div>
<div class="abs" style="left:1055px;top:153.5px;width:1px;height:1.300px;background:#b5a000;opacity:.5"></div>
<div class="abs" style="left:1056px;top:129px;width:80px;height:1px;background:#25496c"></div>
<div class="abs" style="left:1136px;top:106px;width:1px;height:242px;background:#353535"></div>
<div class="abs" style="left:1137px;top:186px;width:13px;height:1.600px;background:#9c9c9c"></div>
<div class="abs" style="left:0;top:347.500px;width:1151px;height:23px;background:#007acc"></div>
<svg class="abs" style="left:21px;top:352px" width="14" height="14" viewBox="0 0 14 14" fill="none" stroke="#fff" stroke-width="1.1"><circle cx="7" cy="7" r="5.900"/><path d="M4.300 4.300L9.700 9.700M9.700 4.300L4.300 9.700"/></svg>
<div class="abs sb" style="left:38px;top:351px">0</div>
<svg class="abs" style="left:47.69999999999999px;top:351.700px" width="14" height="13" viewBox="0 0 14 13" fill="none" stroke="#fff" stroke-width="1.1" stroke-linejoin="round"><path d="M7 1.200L13 12H1Z"/><path d="M7 5V8.600M7 9.600V10.800"/></svg>
<div class="abs sb" style="left:64.5px;top:351px">0</div>
<div class="abs sb" style="left:83px;top:351px;font-size:12px;letter-spacing:-0.05px">clangd: idle</div>
<div class="abs sb" style="left:854px;top:351px;font-size:12px">Ln 15, Col 6</div>
<div class="abs sb" style="left:928px;top:351px;letter-spacing:-0.6px">LF</div>
<div class="abs sb" style="left:952px;top:351px;">UTF-8</div>
<div class="abs sb" style="left:995px;top:351px;">Spaces: 4</div>
<div class="abs sb" style="left:1056px;top:351px;font-size:12.500px">C++</div>
<svg class="abs" style="left:1093px;top:352px" width="14" height="14" viewBox="0 0 14 14" fill="none" stroke="#fff" stroke-width="1.1" stroke-linejoin="round"><path d="M2 10.500C3.400 9.500 3.200 7.500 3.200 5.800A3.800 3.800 0 0 1 10.800 5.800C10.800 7.500 10.600 9.500 12 10.500Z"/><path d="M5.800 12.200A1.300 1.300 0 0 0 8.200 12.200"/></svg>
<svg class="abs" style="left:1121px;top:352px" width="15" height="13" viewBox="0 0 15 13" fill="none" stroke="#fff" stroke-width="1.200"><rect x="1" y="1.500" width="13" height="10" rx="1"/><path d="M1 4.500H14"/></svg>
<div class="abs" style="left:0;top:0;width:1150px;height:371px;border-radius:9px;border:1px solid transparent;border-left-color:#50545a;border-top-color:#6b7077;border-right-color:#4c4c4c"></div>

</div>

<!-- TERMINALS -->
<div id="tm">
<div class="abs" style="left:0;top:0;width:1151px;height:20px;background:#262626"></div>
<div class="dot" style="left:5px;top:4px;width:12px;height:12px;background:#ec6a5e"></div>
<div class="dot" style="left:23px;top:4px;width:12px;height:12px;background:#f4bf4f"></div>
<div class="dot" style="left:41px;top:4px;width:12px;height:12px;background:#61c554"></div>
<svg class="abs" style="left:562.3px;top:5px" width="14.600" height="14.500" viewBox="0 0 15 14" fill="none" stroke="#80caa3" stroke-width="1.300"><rect x="1" y="1" width="13" height="12" rx="1.800" fill="#1d2f27"/><path d="M3.500 5L6 7L3.500 9M7.500 9.500H10.500" stroke-width="1"/></svg>
<div class="abs sans" style="left:585px;top:4.500px;font-size:12.500px;line-height:16px;color:#929292;letter-spacing:-0.3px">Terminals</div>
<div class="abs" style="left:0;top:20px;width:1151px;height:22px;background:#000"></div>
<div class="abs" style="left:0;top:19.700px;width:286px;height:20.300px;background:#838383"></div>
<div class="abs" style="left:0;top:38.100px;width:286px;height:1.900px;background:#fff"></div>
<div class="abs sans" style="left:9.300000000000011px;top:24.300px;font-size:16px;line-height:18px;font-weight:bold;color:#fff;white-space:pre"># 1</div>
<svg class="abs" style="left:204.00000000000006px;top:23.650px" width="12.400" height="12.400" viewBox="0 0 14 14" fill="#fff"><path d="M1 13V10.200L8.800 2.400L11.600 5.200L3.800 13Z M9.600 1.600L10.700 .5Q11.200 0 11.700 .5L13.500 2.300Q14 2.800 13.500 3.300L12.400 4.400Z"/></svg>
<svg class="abs" style="left:231.20000000000005px;top:23.200px" width="12.800" height="12.800" viewBox="0 0 14 14" fill="none" stroke="#fff" stroke-width="1.500"><path d="M6 1.700H1.700V12.300H12.300V8"/><path d="M8.200 1.200H12.800V5.800M12.600 1.400L5.600 8.400"/></svg>
<svg class="abs" style="left:259.70000000000005px;top:22.500px" width="12" height="13" viewBox="0 0 12 13" fill="none" stroke="#fff" stroke-width="1.800"><path d="M6 2.600A4.700 4.700 0 1 1 1.500 5.900"/><path d="M6.400 0L3 2.600L6.400 5.200Z" fill="#fff" stroke="none"/></svg>
<div class="abs sans" style="left:295px;top:24.300px;font-size:16px;line-height:18px;font-weight:bold;color:#fff;white-space:pre"># 2</div>
<svg class="abs" style="left:489.59999999999997px;top:23.650px" width="12.400" height="12.400" viewBox="0 0 14 14" fill="#fff"><path d="M1 13V10.200L8.800 2.400L11.600 5.200L3.800 13Z M9.600 1.600L10.700 .5Q11.200 0 11.700 .5L13.500 2.300Q14 2.800 13.500 3.300L12.400 4.400Z"/></svg>
<svg class="abs" style="left:516.8px;top:23.200px" width="12.800" height="12.800" viewBox="0 0 14 14" fill="none" stroke="#fff" stroke-width="1.500"><path d="M6 1.700H1.700V12.300H12.300V8"/><path d="M8.200 1.200H12.800V5.800M12.600 1.400L5.600 8.400"/></svg>
<svg class="abs" style="left:545.3px;top:22.500px" width="12" height="13" viewBox="0 0 12 13" fill="none" stroke="#fff" stroke-width="1.800"><path d="M6 2.600A4.700 4.700 0 1 1 1.500 5.900"/><path d="M6.400 0L3 2.600L6.400 5.200Z" fill="#fff" stroke="none"/></svg>
<div class="abs sans" style="left:580.2px;top:24.300px;font-size:16px;line-height:18px;font-weight:bold;color:#fff;white-space:pre"># 3</div>
<svg class="abs" style="left:775.2px;top:23.650px" width="12.400" height="12.400" viewBox="0 0 14 14" fill="#fff"><path d="M1 13V10.200L8.800 2.400L11.600 5.200L3.800 13Z M9.600 1.600L10.700 .5Q11.200 0 11.700 .5L13.500 2.300Q14 2.800 13.500 3.300L12.400 4.400Z"/></svg>
<svg class="abs" style="left:802.4000000000001px;top:23.200px" width="12.800" height="12.800" viewBox="0 0 14 14" fill="none" stroke="#fff" stroke-width="1.500"><path d="M6 1.700H1.700V12.300H12.300V8"/><path d="M8.200 1.200H12.800V5.800M12.600 1.400L5.600 8.400"/></svg>
<svg class="abs" style="left:830.9000000000001px;top:22.500px" width="12" height="13" viewBox="0 0 12 13" fill="none" stroke="#fff" stroke-width="1.800"><path d="M6 2.600A4.700 4.700 0 1 1 1.500 5.900"/><path d="M6.400 0L3 2.600L6.400 5.200Z" fill="#fff" stroke="none"/></svg>
<div class="abs sans" style="left:865.7px;top:24.300px;font-size:16px;line-height:18px;font-weight:bold;color:#fff;white-space:pre"># 4</div>
<svg class="abs" style="left:1060.8px;top:23.650px" width="12.400" height="12.400" viewBox="0 0 14 14" fill="#fff"><path d="M1 13V10.200L8.800 2.400L11.600 5.200L3.800 13Z M9.600 1.600L10.700 .5Q11.200 0 11.700 .5L13.500 2.300Q14 2.800 13.500 3.300L12.400 4.400Z"/></svg>
<svg class="abs" style="left:1088.0px;top:23.200px" width="12.800" height="12.800" viewBox="0 0 14 14" fill="none" stroke="#fff" stroke-width="1.500"><path d="M6 1.700H1.700V12.300H12.300V8"/><path d="M8.200 1.200H12.800V5.800M12.600 1.400L5.600 8.400"/></svg>
<svg class="abs" style="left:1116.5px;top:22.500px" width="12" height="13" viewBox="0 0 12 13" fill="none" stroke="#fff" stroke-width="1.800"><path d="M6 2.600A4.700 4.700 0 1 1 1.500 5.900"/><path d="M6.400 0L3 2.600L6.400 5.200Z" fill="#fff" stroke="none"/></svg>
<div class="abs" style="left:570px;top:20px;width:1.300px;height:20px;background:#8a8a8a"></div>
<div class="abs" style="left:855.5px;top:20px;width:1.300px;height:20px;background:#8a8a8a"></div>
<div class="abs tt" style="left:4px;top:41.60px"><b class="g">user</b>:<b class="bl">~/catkin_ws/src/unit3_demos</b>$ clang++ demo_32.cpp -o demo_32</div>
<div class="abs tt" style="left:4px;top:59.98px"><b>demo_32.cpp:22:18: </b><b class="r">error: </b><b>'fish_shape' is a private member of 'IceTray'</b></div>
<div class="abs tt" style="left:4px;top:78.35px">    orange_juice.fish_shape = "frozen";</div>
<div class="abs tt" style="left:4px;top:96.73px">                 <b class="g ca">^</b></div>
<div class="abs tt" style="left:4px;top:115.10px"><b>demo_32.cpp:8:12: </b><b class="n">note: </b>implicitly declared private here</div>
<div class="abs tt" style="left:4px;top:133.48px">    string fish_shape;</div>
<div class="abs tt" style="left:4px;top:151.85px">           <b class="g ca">^</b></div>
<div class="abs tt" style="left:4px;top:170.23px"><b>demo_32.cpp:23:18: </b><b class="r">error: </b><b>'star_shape' is a private member of 'IceTray'</b></div>
<div class="abs tt" style="left:4px;top:188.60px">    orange_juice.star_shape =  "not frozen";</div>
<div class="abs tt" style="left:4px;top:206.98px">                 <b class="g ca">^</b></div>
<div class="abs tt" style="left:4px;top:225.35px"><b>demo_32.cpp:9:12: </b><b class="n">note: </b>implicitly declared private here</div>
<div class="abs tt" style="left:4px;top:243.73px">    string star_shape;</div>
<div class="abs tt" style="left:4px;top:262.10px">           <b class="g ca">^</b></div>
<div class="abs tt" style="left:4px;top:280.48px"><b>demo_32.cpp:26:18: </b><b class="r">error: </b><b>'status' is a private member of 'IceTray'</b></div>
<div class="abs tt" style="left:4px;top:298.85px">    orange_juice.status();</div>
<div class="abs tt" style="left:4px;top:317.23px">                 <b class="g ca">^</b></div>
<div class="abs tt" style="left:4px;top:335.60px"><b>demo_32.cpp:11:10: </b><b class="n">note: </b>implicitly declared private here</div>
<div class="abs tt" style="left:4px;top:353.98px">    void status(){</div>
<div class="abs tt" style="left:4px;top:372.35px">         <b class="g ca">^</b></div>
<div class="abs tt" style="left:4px;top:390.73px">3 errors generated.</div>
<div class="abs tt" style="left:4px;top:409.10px"><b class="g">user</b>:<b class="bl">~/catkin_ws/src/unit3_demos</b>$ clang++ demo_32.cpp -o demo_32</div>
<div class="abs tt" style="left:4px;top:427.48px"><b class="g">user</b>:<b class="bl">~/catkin_ws/src/unit3_demos</b>$ ./demo_32</div>
<div class="abs tt" style="left:4px;top:445.85px">The crystal which is fish shape is : frozenThe crystal which is star shape is : not frozen</div>
<div class="abs tt" style="left:4px;top:464.23px"><b class="g">user</b>:<b class="bl">~/catkin_ws/src/unit3_demos</b>$ clang++ demo_32.cpp -o demo_32</div>
<div class="abs tt" style="left:4px;top:482.60px"><b class="g">user</b>:<b class="bl">~/catkin_ws/src/unit3_demos</b>$ ./demo_32</div>
<div class="abs" style="left:1125px;top:42.5px;width:15px;height:460.500px;background:#fdfdfd"></div>
<div class="abs" style="left:1127.2px;top:47.69999999999999px;border-style:solid;border-width:0 5px 7.500px 5px;border-color:transparent transparent #8b8b8b transparent;width:0;height:0"></div>
<div class="abs" style="left:1127.2px;top:491px;border-style:solid;border-width:7.500px 5px 0 5px;border-color:#8b8b8b transparent transparent transparent;width:0;height:0"></div>
<div class="abs" style="left:1128px;top:382.5px;width:8.300px;height:92.500px;border-radius:3.500px;background:#8b8b8b"></div>
<div class="abs" style="left:1142px;top:21px;width:9px;height:504px;background:#111"></div>
<div class="abs" style="left:1143.3px;top:32px;width:5.500px;height:471px;border-radius:3px;background:#e8e8e8"></div>
<div class="abs" style="left:1142px;top:22.80000000000001px;border-style:solid;border-width:0 4px 5.500px 4px;border-color:transparent transparent #ddd transparent;width:0;height:0"></div>
<div class="abs" style="left:1142px;top:517px;border-style:solid;border-width:5.500px 4px 0 4px;border-color:#ddd transparent transparent transparent;width:0;height:0"></div>
<div class="abs" style="left:0;top:0;width:1150.500px;height:524.500px;border-radius:9px;border:1px solid rgba(255,255,255,.0);border-left-color:rgba(150,150,150,.45);border-top-color:#6e6e6e;border-bottom-color:#9a9a9a;border-right-color:rgba(255,255,255,.35)"></div>

</div>

<!-- share bar -->
<div class="abs" style="left:562.500px;top:853.700px;width:411px;height:50px;background:rgba(31,31,31,.94);border-bottom:1px solid #2a2a2a"></div>
<div class="abs" style="left:572.200px;top:873.800px;width:1.600px;height:10.600px;background:#e3e3e3"></div>
<div class="abs" style="left:577px;top:873.800px;width:1.600px;height:10.600px;background:#e3e3e3"></div>
<div class="abs sans" style="left:589px;top:871.800px;font-size:12.500px;line-height:17px;color:#e3e3e3;letter-spacing:-0.32px">app.theconstruct.ai is sharing your screen.</div>
<div class="abs" style="left:821px;top:860px;width:106px;height:38.500px;border-radius:19.250px;background:#a8c7fa"></div>
<div class="abs sans" style="left:821px;top:871.800px;width:106px;text-align:center;font-size:13px;line-height:17px;color:#0a306e;letter-spacing:0;-webkit-text-stroke:.3px #0a306e">Stop sharing</div>
<div class="abs sans" style="left:938px;top:871.800px;font-size:12.500px;line-height:17px;color:#a8c7fa;text-decoration:underline;letter-spacing:-0.2px">Hide</div>
<!-- mouse cursor -->
<svg class="abs" style="left:898px;top:797.100px" width="11" height="16" viewBox="-1 -1 11 16"><path d="M0 0V11.900L2.800 9.400L4.900 13.500L6.800 12.600L4.700 8.600H8.300Z" fill="#fff" stroke="#000" stroke-width=".9" stroke-linejoin="round"/></svg>

<!-- TASKBAR -->
<div id="tb">
<div class="abs" style="left:0;top:0;width:1536px;height:48px;background:linear-gradient(90deg,#1c222c 0%,#1a242e 9%,#18282a 12.500%,#2a2a1c 16%,#2a2218 18.500%,#1e1e22 23%,#1e2228 30%,#1e222a 55%,#2c1e20 60%,#301c1c 63%,#261e22 66%,#1f2126 69.500%,#1e2126 100%)"></div>
<div class="abs" style="left:0;top:0;width:1536px;height:1px;background:#33373d"></div>
<svg class="abs" style="left:19px;top:14.5px" width="26" height="16.500" viewBox="0 0 27 24" preserveAspectRatio="none"><defs><linearGradient id="wg" x1="0" y1="0" x2="0" y2="1"><stop offset="0" stop-color="#eaf1ff"/><stop offset="1" stop-color="#9fb8ec"/></linearGradient></defs><path d="M6.500 22.500A5.500 5.500 0 0 1 5.800 11.600A7.200 7.200 0 0 1 19.600 10.400A6.100 6.100 0 0 1 19.800 22.500Z" fill="url(#wg)"/></svg>
<div class="abs" style="left:30px;top:6.5px;width:16px;height:16px;border-radius:50%;background:#f48a98"></div>
<div class="abs sans" style="left:30px;top:6.5px;width:16px;text-align:center;font-size:11px;line-height:16px;color:#222">7</div>
<div class="abs sans" style="left:51.500px;top:7.5px;font-size:12px;line-height:16px;color:#fff;letter-spacing:-0.5px">14°C</div>
<div class="abs sans" style="left:51.500px;top:24px;font-size:12px;line-height:16px;color:#e4e4e4;letter-spacing:-0.1px">Cloudy</div>
<svg class="abs" style="left:468px;top:12.700000000000045px" width="23.500" height="23.500" viewBox="0 0 24 24"><defs><linearGradient id="wl" x1="0" y1="0" x2="1" y2="1"><stop offset="0" stop-color="#6fd8ff"/><stop offset="1" stop-color="#0c8ff0"/></linearGradient></defs><path d="M0 0H11.300V11.300H0ZM12.700 0H24V11.300H12.700ZM0 12.700H11.300V24H0ZM12.700 12.700H24V24H12.700Z" fill="url(#wl)"/></svg>
<div class="abs" style="left:505px;top:8px;width:220px;height:32px;border-radius:16px;background:#3a3e47;border:1px solid #4a4e58"></div>
<svg class="abs" style="left:516px;top:16px" width="16" height="16" viewBox="0 0 16 16" fill="none" stroke="#eee" stroke-width="1.500"><circle cx="6.800" cy="6.800" r="5.300"/><path d="M10.800 10.800L15 15" stroke-linecap="round"/></svg>
<div class="abs sans" style="left:541px;top:15px;font-size:14px;line-height:18px;color:#e2e2e2;letter-spacing:-0.35px">Search</div>
<div class="abs" style="left:743px;top:12.600000000000023px;width:18px;height:16px;border-radius:2px;background:#f2f2f2"></div>
<div class="abs" style="left:736.500px;top:18.799999999999955px;width:18px;height:15.500px;border-radius:2px;background:rgba(118,118,118,.88)"></div>
<svg class="abs" style="left:780.500px;top:12.5px" width="24" height="23" viewBox="0 0 24 23"><defs><linearGradient id="ol1" x1="0" y1="0" x2="1" y2="1"><stop offset="0" stop-color="#4fc8fa"/><stop offset="1" stop-color="#1690e6"/></linearGradient><linearGradient id="ol2" x1="0" y1="1" x2="1" y2="0"><stop offset="0" stop-color="#2456c8"/><stop offset="1" stop-color="#6a48d8"/></linearGradient></defs><path d="M1 9.500L11 .8Q12 0 13 .8L23 9.500V20.500Q23 22.800 20.700 22.800H3.300Q1 22.800 1 20.500Z" fill="url(#ol1)"/><path d="M6 10.500L18.500 4.500L22 7.500L9 14Z" fill="url(#ol2)" opacity=".9"/><path d="M3 8.500L14 2.500L16 4L5 10.500Z" fill="#8ad8ff" opacity=".7"/><path d="M23 10V20.500Q23 22.800 20.700 22.800H8L23 10Z" fill="#2aa8f0" opacity=".6"/><rect x=".5" y="10" width="9.500" height="10" rx="1.800" fill="#1259c6"/><circle cx="5.200" cy="15" r="2.300" fill="none" stroke="#fff" stroke-width="1.500"/></svg>
<svg class="abs" style="left:824px;top:13px" width="25" height="22" viewBox="0 0 25 22"><defs><linearGradient id="cp1" x1="0" y1="0" x2="0" y2="1"><stop offset="0" stop-color="#2a92f2"/><stop offset=".5" stop-color="#52cc72"/><stop offset="1" stop-color="#f6d02c"/></linearGradient><linearGradient id="cp2" x1="0" y1="0" x2="0" y2="1"><stop offset="0" stop-color="#a856f4"/><stop offset=".5" stop-color="#f0508c"/><stop offset="1" stop-color="#f59a2e"/></linearGradient></defs><path d="M9.500 1H14.500Q16.500 1 17 3L18 6.500H13.500L12 11.500Z" fill="#1546c4"/><path d="M5.500 1H12.500Q14.500 1 13.800 3.200L10.800 13.500Q10.200 15.500 8 15.500H3Q.5 15.500 1.200 13L3.500 3.200Q4 1 5.500 1Z" fill="url(#cp1)"/><path d="M8 21Q9.500 21 10 19L11 15.500L8.500 15.500Q8 21 8 21Z" fill="#e8502a"/><path d="M19.500 21H12.500Q10.500 21 11.200 18.800L14.200 8.500Q14.800 6.500 17 6.500H22Q24.500 6.500 23.800 9L21.500 18.800Q21 21 19.500 21Z" fill="url(#cp2)"/></svg>
<svg class="abs" style="left:868.500px;top:12.799999999999955px" width="25" height="23" viewBox="0 0 25 23"><defs><linearGradient id="fe1" x1="0" y1="0" x2="0" y2="1"><stop offset="0" stop-color="#ffd84e"/><stop offset="1" stop-color="#f7b71e"/></linearGradient></defs><path d="M.5 2Q.5 .5 2 .5H8.500Q9.500 .5 10.200 1.300L11.500 3H23Q24.500 3 24.500 4.500V8H.5Z" fill="#e6a616"/><path d="M.5 5Q.5 3.500 2 3.500H9L11 2.500H23Q24.500 2.500 24.500 4V21Q24.500 22.500 23 22.500H2Q.5 22.500 .5 21Z" fill="url(#fe1)"/><path d="M6 16.500H19Q20.500 16.500 20.500 18V22.500H4.500V18Q4.500 16.500 6 16.500Z" fill="#1b7bd6"/><rect x="7.500" y="18.600" width="10" height="1.500" rx=".75" fill="#0e58ae"/></svg>
<div class="abs" style="left:909px;top:4.600000000000023px;width:35px;height:39px;border-radius:4px;background:rgba(255,255,255,.045);border:1px solid rgba(255,255,255,.07)"></div>
<div class="abs" style="left:905px;top:4.600000000000023px;width:35px;height:39px;border-radius:4px;background:#2c2a30;border:1px solid #3c3a40"></div>
<svg class="abs" style="left:912.500px;top:12px" width="25" height="25" viewBox="0 0 48 48"><circle cx="24" cy="24" r="22" fill="#fff"/><path d="M24 2A22 22 0 0 1 43.050 13H24A11 11 0 0 0 14.470 18.500L4.950 13A22 22 0 0 1 24 2Z" fill="#ea4335"/><path d="M4.950 13L14.470 29.500A11 11 0 0 0 24 35L17 45A22 22 0 0 1 4.950 13Z" fill="#34a853"/><path d="M43.050 13A22 22 0 0 1 17 45L33.530 29.500A11 11 0 0 0 33.530 18.500L24 13Z" fill="#fbbc05"/><path d="M4.950 13A22 22 0 0 1 43.050 13H24A11 11 0 0 0 14.470 18.500Z" fill="#ea4335"/><circle cx="24" cy="24" r="10" fill="#fff"/><circle cx="24" cy="24" r="8" fill="#4285f4"/></svg>
<div class="abs" style="left:917px;top:40px;width:16px;height:3px;border-radius:1.500px;background:#f2846a"></div>
<svg class="abs" style="left:956.800px;top:11.799999999999955px" width="24.500" height="24.500" viewBox="0 0 24 24" fill="#fff"><path d="M22.2819 9.8211a5.9847 5.9847 0 0 0-.5157-4.9108 6.0462 6.0462 0 0 0-6.5098-2.9A6.0651 6.0651 0 0 0 4.9807 4.1818a5.9847 5.9847 0 0 0-3.9977 2.9 6.0462 6.0462 0 0 0 .7427 7.0966 5.98 5.98 0 0 0 .511 4.9107 6.051 6.051 0 0 0 6.5146 2.9001A5.9847 5.9847 0 0 0 13.2599 24a6.0557 6.0557 0 0 0 5.7718-4.2058 5.9894 5.9894 0 0 0 3.9977-2.9001 6.0557 6.0557 0 0 0-.7475-7.0729zm-9.022 12.6081a4.4755 4.4755 0 0 1-2.8764-1.0408l.1419-.0804 4.7783-2.7582a.7948.7948 0 0 0 .3927-.6813v-6.7369l2.02 1.1686a.071.071 0 0 1 .038.052v5.5826a4.504 4.504 0 0 1-4.4945 4.4944zm-9.6607-4.1254a4.4708 4.4708 0 0 1-.5346-3.0137l.142.0852 4.783 2.7582a.7712.7712 0 0 0 .7806 0l5.8428-3.3685v2.3324a.0804.0804 0 0 1-.0332.0615L9.74 19.9502a4.4992 4.4992 0 0 1-6.1408-1.6464zM2.3408 7.8956a4.485 4.485 0 0 1 2.3655-1.9728V11.6a.7664.7664 0 0 0 .3879.6765l5.8144 3.3543-2.0201 1.1685a.0757.0757 0 0 1-.071 0l-4.8303-2.7865A4.504 4.504 0 0 1 2.3408 7.872zm16.5963 3.8558L13.1038 8.364 15.1192 7.2a.0757.0757 0 0 1 .071 0l4.8303 2.7913a4.4944 4.4944 0 0 1-.6765 8.1042v-5.6772a.79.79 0 0 0-.407-.667zm2.0107-3.0231l-.142-.0852-4.7735-2.7818a.7759.7759 0 0 0-.7854 0L9.409 9.2297V6.8974a.0662.0662 0 0 1 .0284-.0615l4.8303-2.7866a4.4992 4.4992 0 0 1 6.6802 4.66zM8.3065 12.863l-2.02-1.1638a.0804.0804 0 0 1-.038-.0567V6.0742a4.4992 4.4992 0 0 1 7.3757-3.4537l-.142.0805L8.704 5.459a.7948.7948 0 0 0-.3927.6813zm1.0976-2.3654l2.602-1.4998 2.6069 1.4998v2.9994l-2.5974 1.4997-2.6067-1.4997Z"/></svg>
<div class="abs" style="left:965px;top:40.5px;width:6px;height:2.500px;border-radius:1.250px;background:#8a8a8a"></div>
<svg class="abs" style="left:1000px;top:12.5px" width="26" height="22" viewBox="0 0 26 22"><defs><linearGradient id="m1" x1="0" y1="0" x2="0" y2="1"><stop offset="0" stop-color="#2a92f2"/><stop offset=".45" stop-color="#3cc4a0"/><stop offset=".8" stop-color="#f2dc2a"/><stop offset="1" stop-color="#f5a02a"/></linearGradient><linearGradient id="m2" x1="0" y1="0" x2="0" y2="1"><stop offset="0" stop-color="#a25af6"/><stop offset=".6" stop-color="#f0569a"/><stop offset="1" stop-color="#f57a5a"/></linearGradient></defs><path d="M8.500 .8H13.500Q15.500 .8 16 2.800L17 6H12.500L11 10.500Z" fill="#1546c4"/><path d="M5 .5H11Q13.500 .5 12.800 3L9.800 14Q9.300 16 7 16H5L4.200 20.500L3.600 16H3Q.5 16 1.200 13.500L3.200 3Q3.600 .5 5 .5Z" fill="url(#m1)"/><path d="M20 16.500H12Q10.500 16.500 11 14.800L13.500 7.800Q14.200 5.800 16.200 5.800H21.500Q24.500 5.800 24 8.500L22.500 14.500Q22 16.500 20 16.500Z" fill="url(#m2)"/></svg>
<div class="abs sans" style="left:1008.200px;top:29.5px;width:16.500px;height:6px;border-radius:1.500px;background:#050505;color:#fff;font-size:5.800px;line-height:6.400px;font-weight:bold;text-align:center;letter-spacing:-0.2px">M365</div>
<svg class="abs" style="left:1044.500px;top:11.5px" width="26" height="26" viewBox="0 0 26 26"><rect x=".5" y=".4" width="17.600" height="18.200" rx="2.600" fill="#f3f3f3"/><g fill="#d4591f"><rect x="2.600" y="3" width="2.200" height="2.200"/><rect x="6.200" y="3" width="2.200" height="2.200"/><rect x="9.800" y="3" width="2.200" height="2.200"/><rect x="2.600" y="6.600" width="2.200" height="2.200"/><rect x="2.600" y="10.200" width="2.200" height="2.200"/></g><path d="M6 6.400H14.600V15.400H6Z" fill="#e6e6e6"/><path d="M14 6.400H15.600V15.800H6V14.600H14Z" fill="#bdbdbd"/><circle cx="22" cy="13.200" r="2" fill="none" stroke="#3a9be2" stroke-width="1.500"/><circle cx="13.200" cy="22.600" r="2" fill="none" stroke="#3a9be2" stroke-width="1.500"/><path d="M20.300 14.200L13.500 17.200M14 20.800L16 14.500" stroke="#3a9be2" stroke-width="1.400" stroke-linecap="round"/><path d="M15.200 14.200L17.200 16.200" stroke="#c8c8c8" stroke-width="1.600"/></svg>
<div class="abs" style="left:1053.500px;top:40.299999999999955px;width:6.300px;height:2.300px;border-radius:1.150px;background:#9a9a9a"></div>
<svg class="abs" style="left:1312.500px;top:20.5px" width="12" height="7" viewBox="0 0 12 7" fill="none" stroke="#fff" stroke-width="1.500" stroke-linecap="round" stroke-linejoin="round"><path d="M1 6L6 1L11 6"/></svg>
<svg class="abs" style="left:1341.500px;top:18px" width="18" height="12" viewBox="0 0 18 12"><path d="M4.200 11.500A3.700 3.700 0 0 1 3.800 4.200A4.800 4.800 0 0 1 12.600 3.400A4.100 4.100 0 0 1 13.600 11.500Z" fill="#1a86e0"/><path d="M8 11.500L15.500 5Q17.800 6.500 17.300 8.800Q16.800 11.200 14 11.500Z" fill="#48b8f8"/></svg>
<svg class="abs" style="left:1373.500px;top:17px" width="18" height="14" viewBox="0 0 18 14" fill="none" stroke="#fff" stroke-width="1.400" stroke-linecap="round"><path d="M1.200 5.200A11 11 0 0 1 16.800 5.200"/><path d="M3.800 7.900A7.300 7.300 0 0 1 14.200 7.900"/><path d="M6.400 10.500A3.700 3.700 0 0 1 11.600 10.500"/><circle cx="9" cy="12.400" r=".9" fill="#fff" stroke="none"/></svg>
<svg class="abs" style="left:1397.500px;top:16.5px" width="18" height="14" viewBox="0 0 18 14" fill="none" stroke="#fff" stroke-width="1.300" stroke-linejoin="round"><path d="M1 4.800H3.800L7.600 1.400V12.600L3.800 9.200H1Z"/><path d="M10 4.800A3.200 3.200 0 0 1 10 9.200" stroke-linecap="round"/><path d="M12.400 2.800A6 6 0 0 1 12.400 11.200" stroke="#8a8a8a" stroke-linecap="round"/><path d="M14.800 1A8.800 8.800 0 0 1 14.800 13" stroke="#5a5a5a" stroke-linecap="round"/></svg>
<svg class="abs" style="left:1421.500px;top:18.5px" width="18" height="11" viewBox="0 0 18 11"><rect x=".8" y=".8" width="14.400" height="9.400" rx="2.600" fill="none" stroke="#fff" stroke-width="1.400"/><rect x="3" y="3" width="7" height="5" rx="1" fill="#fff"/><path d="M16.500 3.800V7.200" stroke="#fff" stroke-width="1.600" stroke-linecap="round"/></svg>
<div class="abs sans" style="left:1416px;top:7.5px;width:100px;text-align:right;font-size:12px;line-height:16px;color:#fff;letter-spacing:-0.15px">8:26 PM</div>
<div class="abs sans" style="left:1416px;top:23.5px;width:100px;text-align:right;font-size:12px;line-height:16px;color:#fff;letter-spacing:.25px">13/11/2025</div>

</div>
</div>
</body>
</html>
